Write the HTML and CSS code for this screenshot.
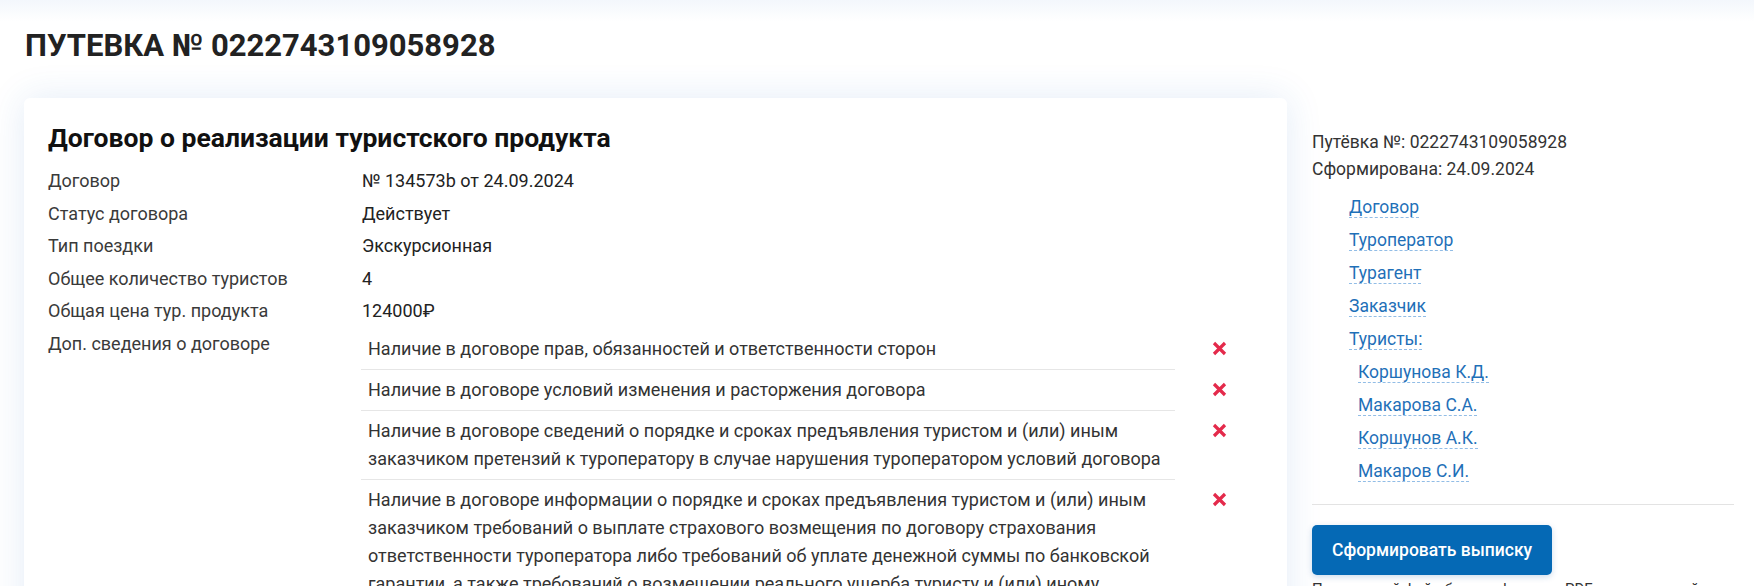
FILE: index.html
```html
<!DOCTYPE html>
<html lang="ru">
<head>
    <meta charset="UTF-8">
    <meta name="viewport" content="width=device-width, initial-scale=1.0">
    <title>Путевка № 0222743109058928</title>
    <link rel="stylesheet" href="styles.css">
</head>
<body>
    <div class="page">
        <h1 class="page-title">ПУТЕВКА № 0222743109058928</h1>

        <div class="layout">
            <div class="card" id="contract">
                <h2 class="card-title">Договор о реализации туристского продукта</h2>
                <div class="info">
                    <div class="info-label">Договор</div>
                    <div class="info-value">№ 134573b от 24.09.2024</div>

                    <div class="info-label">Статус договора</div>
                    <div class="info-value">Действует</div>

                    <div class="info-label">Тип поездки</div>
                    <div class="info-value">Экскурсионная</div>

                    <div class="info-label">Общее количество туристов</div>
                    <div class="info-value">4</div>

                    <div class="info-label">Общая цена тур. продукта</div>
                    <div class="info-value">124000₽</div>

                    <div class="info-label">Доп. сведения о договоре</div>
                    <div class="info-value">
                        <ul class="checks">
                            <li class="check">
                                <span class="check-text">Наличие в договоре прав, обязанностей и ответственности сторон</span>
                                <span class="check-mark"><svg width="15" height="15" viewBox="0 0 15 15"><path d="M2 2 13 13M13 2 2 13"/></svg></span>
                            </li>
                            <li class="check">
                                <span class="check-text">Наличие в договоре условий изменения и расторжения договора</span>
                                <span class="check-mark"><svg width="15" height="15" viewBox="0 0 15 15"><path d="M2 2 13 13M13 2 2 13"/></svg></span>
                            </li>
                            <li class="check">
                                <span class="check-text">Наличие в договоре сведений о порядке и сроках предъявления туристом и (или) иным заказчиком претензий к туроператору в случае нарушения туроператором условий договора</span>
                                <span class="check-mark"><svg width="15" height="15" viewBox="0 0 15 15"><path d="M2 2 13 13M13 2 2 13"/></svg></span>
                            </li>
                            <li class="check">
                                <span class="check-text">Наличие в договоре информации о порядке и сроках предъявления туристом и (или) иным заказчиком требований о выплате страхового возмещения по договору страхования ответственности туроператора либо требований об уплате денежной суммы по банковской гарантии, а также требований о возмещении реального ущерба туристу и (или) иному заказчику в случае неисполнения туроператором обязательств по договору</span>
                                <span class="check-mark"><svg width="15" height="15" viewBox="0 0 15 15"><path d="M2 2 13 13M13 2 2 13"/></svg></span>
                            </li>
                        </ul>
                    </div>
                </div>
            </div>

            <aside class="side">
                <div class="side-meta">Путёвка №: 0222743109058928</div>
                <div class="side-meta">Сформирована: 24.09.2024</div>
                <ul class="side-nav">
                    <li><a href="#contract">Договор</a></li>
                    <li><a href="#operator">Туроператор</a></li>
                    <li><a href="#agent">Турагент</a></li>
                    <li><a href="#customer">Заказчик</a></li>
                    <li>
                        <a href="#tourists">Туристы:</a>
                        <ul class="side-sub">
                            <li><a href="#tourist-1">Коршунова К.Д.</a></li>
                            <li><a href="#tourist-2">Макарова С.А.</a></li>
                            <li><a href="#tourist-3">Коршунов А.К.</a></li>
                            <li><a href="#tourist-4">Макаров С.И.</a></li>
                        </ul>
                    </li>
                </ul>
                <hr class="side-sep">
                <button type="button" class="btn">Сформировать выписку</button>
                <p class="side-note">Полученный файл будет в формате PDF с электронной подписью</p>
            </aside>
        </div>
    </div>
</body>
</html>
```

FILE: styles.css
```css
body {
    margin: 0;
    background: linear-gradient(#f3f7fc, #fff 22px);
    color: #333;
    font-family: Roboto, "Liberation Sans", sans-serif;
}

.page {
    padding: 27px 20px 0 24px;
}

.page-title {
    color: #222;
    font-size: 31px;
    font-weight: 700;
    line-height: 38px;
    margin: 0 0 33px 1px;
}

.layout {
    align-items: flex-start;
    display: flex;
    gap: 25px;
}

/* main card */
.card {
    background: #fff;
    border-radius: 6px;
    box-shadow: 0 0 36px rgba(40, 110, 190, 0.13);
    box-sizing: border-box;
    flex: none;
    padding: 25px 24px 40px;
    width: 1263px;
}

.card-title {
    color: #111;
    font-size: 26.5px;
    font-weight: 700;
    line-height: 30px;
    margin: 0 0 12px;
}

.info {
    display: grid;
    font-size: 18px;
    grid-template-columns: 314px 1fr;
    line-height: 32.6px;
}

.info-label {
    color: #3a3a3a;
}

.info-value {
    color: #222;
}

.checks {
    line-height: 28px;
    list-style: none;
    margin: 1px 0 0 -1px;
    padding: 0;
}

.check {
    display: flex;
}

.check-text {
    border-bottom: 1px solid #e6e6e6;
    color: #333;
    flex: 1;
    padding: 6px 10px 6px 7px;
}

.check-mark {
    display: flex;
    flex: none;
    justify-content: center;
    padding-top: 12px;
    width: 88px;
}

.check-mark svg {
    fill: none;
    stroke: #e42a4b;
    stroke-width: 3.2;
}

/* right column */
.side {
    flex: 1;
    font-size: 17.5px;
    padding-top: 31px;
}

.side-meta {
    color: #333;
    line-height: 27px;
}

.side-nav {
    line-height: 33px;
    list-style: none;
    margin: 8px 0 0;
    padding: 0 0 0 37px;
}

.side-sub {
    list-style: none;
    margin: 0;
    padding: 0 0 0 9px;
}

.side-nav a {
    border-bottom: 1px dashed #92bde6;
    color: #1f70b8;
    text-decoration: none;
}

.side-sep {
    border: 0;
    border-top: 1px solid #e3e3e3;
    margin: 16px 0 20px;
}

.btn {
    background: #0569b5;
    border: 0;
    border-radius: 5px;
    box-shadow: 0 2px 6px rgba(0, 80, 160, 0.2);
    color: #fff;
    cursor: pointer;
    font-family: Roboto, "Liberation Sans", sans-serif;
    font-size: 17.5px;
    font-weight: 500;
    height: 50px;
    padding: 0 20px;
}

.side-note {
    color: #333;
    font-size: 15px;
    line-height: 20px;
    margin: 4px 0 0;
}
```
